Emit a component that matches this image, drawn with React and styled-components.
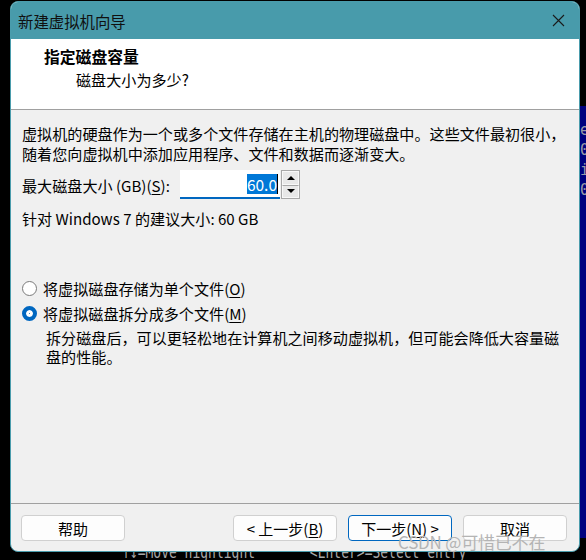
import React from 'react'
import styled, { createGlobalStyle } from 'styled-components'

const Global = createGlobalStyle`
  html, body {
    margin: 0;
    padding: 0;
    background: #000;
  }
  body {
    font-family: "Noto Sans CJK SC", "Noto Sans", sans-serif;
  }
`

const Desktop = styled.div`
  position: relative;
  width: 586px;
  height: 560px;
  overflow: hidden;
  background: #000;
  padding: 1px 0 0 10px;
  box-sizing: border-box;
`

const NavyStrip = styled.div`
  position: absolute;
  right: 0;
  top: 106px;
  width: 8px;
  height: 432px;
  background: #00007f;
  color: #9a9aa8;
  font-family: "DejaVu Sans Mono", monospace;
  font-size: 15px;
  line-height: 20px;
  padding: 14px 0 0 2px;
  box-sizing: border-box;
  white-space: pre;
`

const ConsoleHint = styled.div`
  position: absolute;
  left: 122px;
  top: 542px;
  color: #a8a8a8;
  font-family: "DejaVu Sans Mono", monospace;
  font-size: 13px;
  line-height: 16px;
  white-space: pre;
  transform: scaleY(1.3);
  transform-origin: left top;
`

const Watermark = styled.div`
  position: absolute;
  left: 398px;
  top: 531px;
  font-size: 17px;
  line-height: 22px;
  color: #b4b4b4;
  letter-spacing: -0.2px;
  z-index: 5;
`

const Window = styled.div`
  position: relative;
  z-index: 2;
  width: 570px;
  height: 551px;
  box-sizing: border-box;
  border: 1px solid #4a9cac;
  border-radius: 8px;
  overflow: hidden;
  display: flex;
  flex-direction: column;
  background: #f0f0f0;
  color: #000;
  font-size: 15.1px;
`

const TitleBar = styled.div`
  height: 37px;
  flex-shrink: 0;
  background: #489bab;
  display: flex;
  align-items: center;
  justify-content: space-between;
  padding: 0 14px 0 7px;
  font-size: 15.4px;
  color: #101010;
`

const CloseIcon = () => (
  <svg width="13" height="13" viewBox="0 0 13 13">
    <path d="M1 1 L12 12 M12 1 L1 12" stroke="#1a1a1a" strokeWidth="1.1" fill="none" />
  </svg>
)

const Header = styled.div`
  height: 71px;
  flex-shrink: 0;
  background: #fff;
  border-bottom: 1px solid #a0a0a0;
  box-sizing: border-box;
  padding: 8px 0 0 33px;
`

const Heading = styled.div`
  font-weight: 700;
  font-size: 15.8px;
  line-height: 20px;
`

const SubHeading = styled.div`
  margin: 2px 0 0 32px;
  line-height: 20px;
`

const Body = styled.div`
  flex: 1;
  padding: 13px 11px 0 11px;
  line-height: 20px;
`

const Para = styled.p`
  margin: 0;
  margin-top: ${p => p.$top || 0}px;
  padding-left: ${p => p.$indent || 0}px;
  line-height: ${p => p.$lh || 20}px;
`

const SizeRow = styled.div`
  display: flex;
  align-items: center;
  margin-top: 7px;
  height: 29px;
`

const SizeLabel = styled.span`
  width: 158px;
`

const NumberBox = styled.div`
  width: 100px;
  height: 29px;
  box-sizing: border-box;
  background: #fff;
  border-bottom: 2px solid #0067c0;
  display: flex;
  justify-content: flex-end;
  align-items: center;
  padding-right: 2px;
`

const Selected = styled.span`
  background: #0078d7;
  color: #fff;
  line-height: 20px;
  font-size: 15.5px;
  border-right: 1px solid #000;
`

const Spin = styled.div`
  display: flex;
  flex-direction: column;
  margin-left: 1px;
  width: 19px;
  height: 29px;
  border: 1px solid #a8a8a8;
  box-sizing: border-box;
`

const SpinButton = styled.div`
  flex: 1;
  display: flex;
  align-items: center;
  justify-content: center;
  background: #e8e8e8;
  border: 1px solid #f8f8f8;
  & + & {
    border-top: 1px solid #a8a8a8;
  }
`

const Arrow = styled.div`
  width: 0;
  height: 0;
  border-left: 4px solid transparent;
  border-right: 4px solid transparent;
  ${p => (p.$down ? 'border-top: 4px solid #000;' : 'border-bottom: 4px solid #000;')}
`

const RadioRow = styled.label`
  display: flex;
  align-items: center;
  gap: 6px;
  margin-top: ${p => p.$top}px;
  line-height: 20px;
`

const RadioDot = styled.span`
  width: 15px;
  height: 15px;
  box-sizing: border-box;
  border-radius: 50%;
  flex-shrink: 0;
  ${p =>
    p.$checked
      ? 'background: #0067c0; border: 4px solid #0067c0; box-shadow: inset 0 0 0 3px #fff;'
      : 'background: #fff; border: 1px solid #7a7a7a;'}
`

const Key = styled.span`
  text-decoration: underline;
  text-underline-offset: 2px;
`

const Footer = styled.div`
  flex-shrink: 0;
  border-top: 1px solid #a0a0a0;
  padding: 11px 12px 10px 10px;
  display: flex;
  align-items: center;
`

const Button = styled.button`
  width: 104px;
  height: 26px;
  box-sizing: border-box;
  background: #fdfdfd;
  border: 1px solid ${p => (p.$primary ? '#0067c0' : '#d0d0d0')};
  border-radius: 4px;
  font-family: inherit;
  font-size: 15px;
  color: #000;
  padding: 0;
  margin-left: ${p => p.$gap || 0}px;
`

const Spacer = styled.div`
  flex: 1;
`

export default function App() {
  return (
    <Desktop>
      <Global />
      <NavyStrip>{'e\n0\ni\n0x'}</NavyStrip>
      <ConsoleHint>{'↑↓=Move highlight       <Enter>=Select entry'}</ConsoleHint>
      <Window>
        <TitleBar>
          <span>新建虚拟机向导</span>
          <CloseIcon />
        </TitleBar>
        <Header>
          <Heading>指定磁盘容量</Heading>
          <SubHeading>磁盘大小为多少?</SubHeading>
        </Header>
        <Body>
          <Para>
            虚拟机的硬盘作为一个或多个文件存储在主机的物理磁盘中。这些文件最初很小，
            <br />
            随着您向虚拟机中添加应用程序、文件和数据而逐渐变大。
          </Para>
          <SizeRow>
            <SizeLabel>
              最大磁盘大小 (GB)(<Key>S</Key>):
            </SizeLabel>
            <NumberBox>
              <Selected>60.0</Selected>
            </NumberBox>
            <Spin>
              <SpinButton>
                <Arrow />
              </SpinButton>
              <SpinButton>
                <Arrow $down />
              </SpinButton>
            </Spin>
          </SizeRow>
          <Para $top={9}>针对 Windows 7 的建议大小: 60 GB</Para>
          <RadioRow $top={50}>
            <RadioDot />
            <span>
              将虚拟磁盘存储为单个文件(<Key>O</Key>)
            </span>
          </RadioRow>
          <RadioRow $top={5}>
            <RadioDot $checked />
            <span>
              将虚拟磁盘拆分成多个文件(<Key>M</Key>)
            </span>
          </RadioRow>
          <Para $top={5} $indent={24} $lh={19}>
            拆分磁盘后，可以更轻松地在计算机之间移动虚拟机，但可能会降低大容量磁
            <br />
            盘的性能。
          </Para>
        </Body>
        <Footer>
          <Button>帮助</Button>
          <Spacer />
          <Button>
            &lt; 上一步(<Key>B</Key>)
          </Button>
          <Button $primary $gap={11}>
            下一步(<Key>N</Key>) &gt;
          </Button>
          <Button $gap={11}>取消</Button>
        </Footer>
      </Window>
      <Watermark>CSDN @可惜已不在</Watermark>
    </Desktop>
  )
}
